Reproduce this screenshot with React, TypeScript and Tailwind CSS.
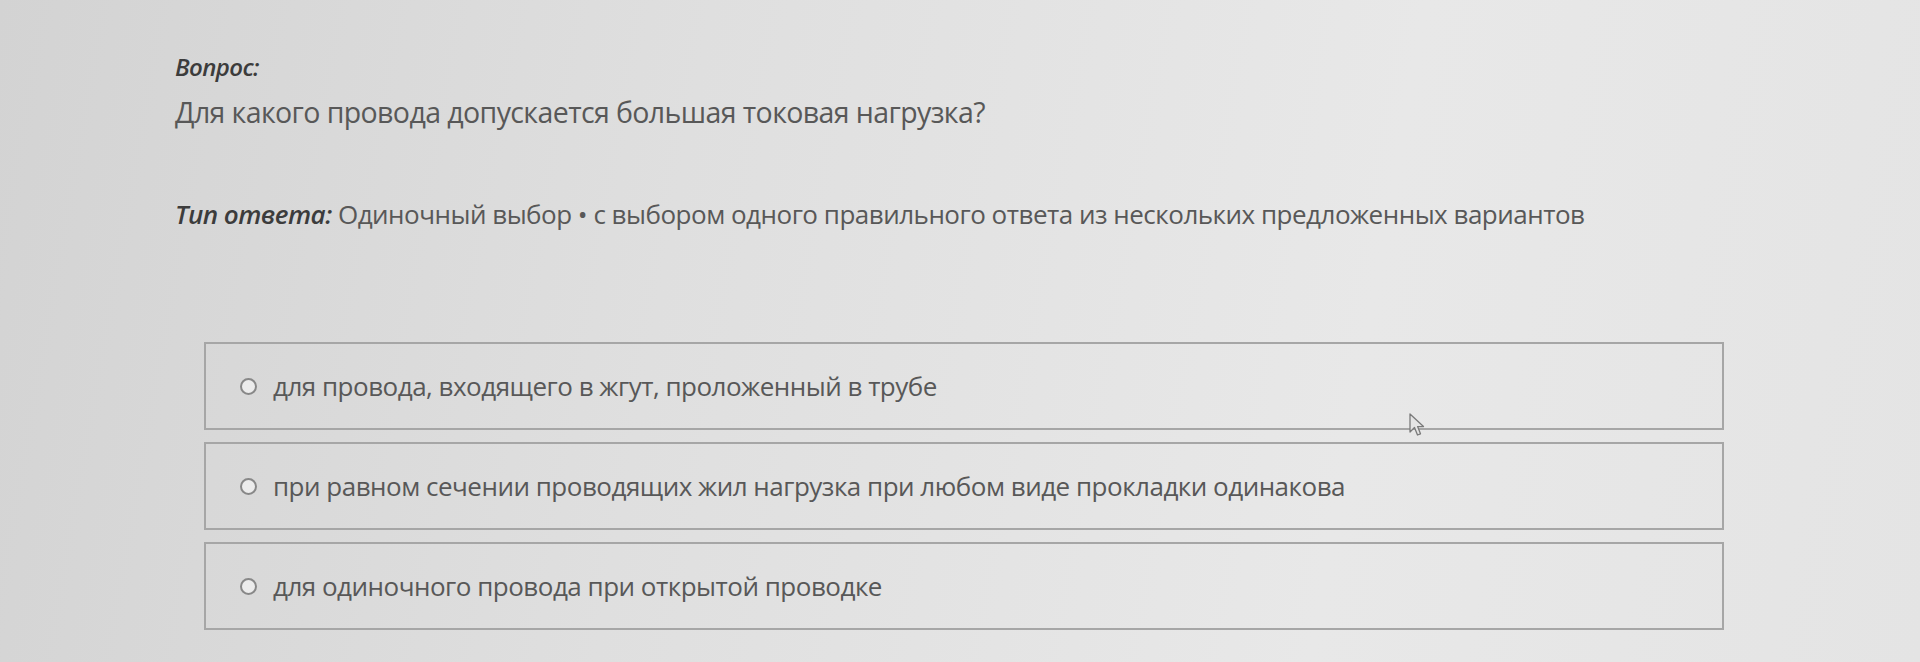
import React from "react";

const options = [
  "для провода, входящего в жгут, проложенный в трубе",
  "при равном сечении проводящих жил нагрузка при любом виде прокладки одинакова",
  "для одиночного провода при открытой проводке",
];

const Cursor: React.FC = () => (
  <svg width="20" height="26" viewBox="0 0 20 26" className="absolute left-[1408px] top-[412px]">
    <path
      d="M2 2 L2 20 L6.5 15.5 L9.5 23 L12.5 21.8 L9.6 14.6 L15.5 14.6 Z"
      fill="#e4e4e4"
      stroke="#7a7a7a"
      strokeWidth="1.3"
      strokeLinejoin="round"
    />
  </svg>
);

const App: React.FC = () => {
  return (
    <div
      className="relative h-[662px] w-full overflow-hidden bg-[linear-gradient(100deg,#d3d3d3_0%,#dfdfdf_35%,#e8e8e8_70%,#e4e4e4_100%)] text-[#585858]"
      style={{ fontFamily: '"Open Sans", "Noto Sans", sans-serif' }}
    >
      <div className="pl-[175px] pt-[50px]">
        {/* Question */}
        <div className="text-[24px] font-semibold italic leading-[34px] tracking-[-0.6px] text-[#3c3c3c]">Вопрос:</div>
        <div className="mt-[8px] text-[28.5px] leading-[40px] tracking-[-0.6px]">
          Для какого провода допускается большая токовая нагрузка?
        </div>

        {/* Answer type */}
        <div className="mt-[64px] text-[26px] leading-[36px] tracking-[-0.5px]">
          <span className="font-semibold italic text-[#3c3c3c]">Тип ответа:</span> Одиночный выбор • с выбором одного
          правильного ответа из нескольких предложенных вариантов
        </div>
      </div>

      {/* Options */}
      <div className="mt-[110px] flex flex-col gap-[12px] pl-[204px] pr-[196px]">
        {options.map((o) => (
          <div
            key={o}
            className="flex h-[88px] items-center gap-[16px] border-2 border-[#a6a6a6] pl-[34px]"
          >
            <span className="h-[17px] w-[17px] shrink-0 rounded-full border-2 border-[#888888] bg-[#ececec]" />
            <span className="text-[26px] tracking-[-0.5px]">{o}</span>
          </div>
        ))}
      </div>

      <Cursor />
    </div>
  );
};

export default App;
